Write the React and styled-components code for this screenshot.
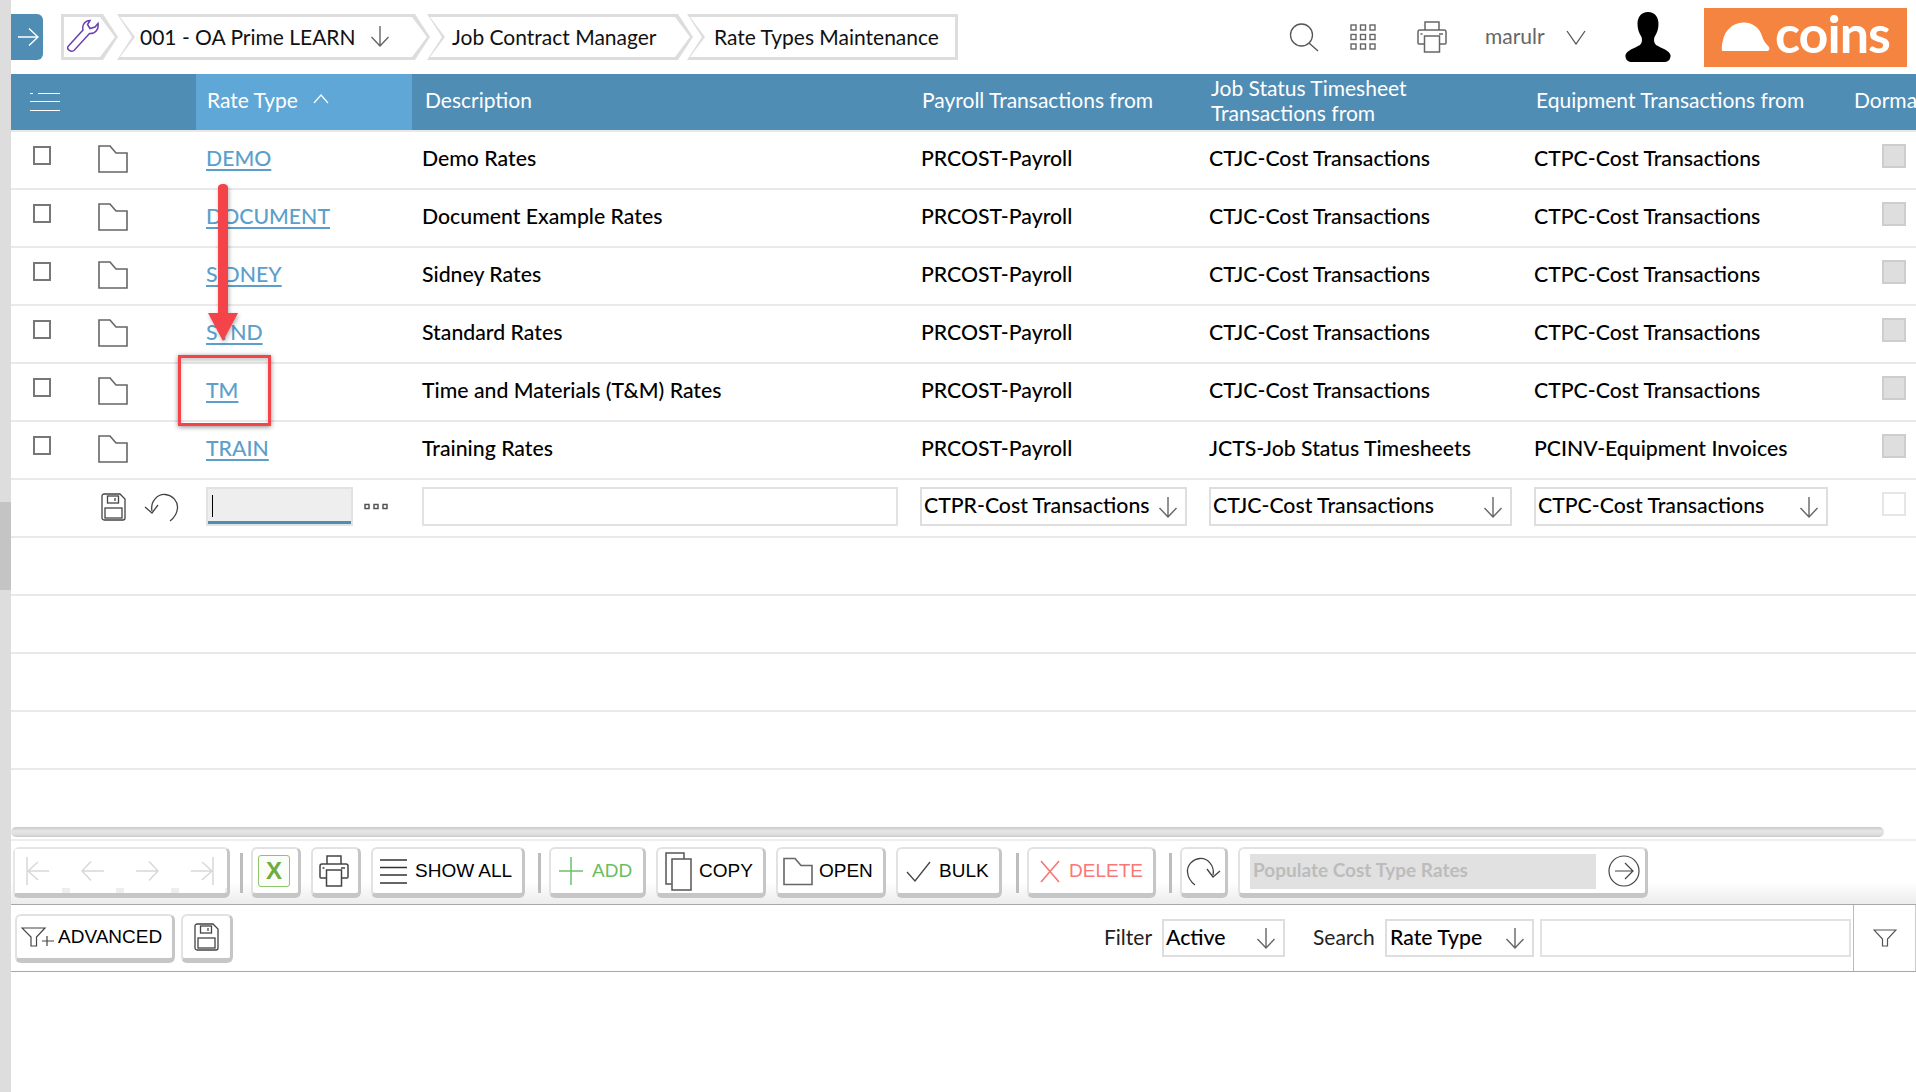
import React from 'react';
import styled, { createGlobalStyle } from 'styled-components';

const Global = createGlobalStyle`
  html, body { margin: 0; padding: 0; background: #fff; }
  body { font-family: Lato, "Liberation Sans", sans-serif; color: #000; }
  * { box-sizing: border-box; }
`;

const Page = styled.div`
  position: relative; display: flex; width: 1916px; height: 1092px; overflow: hidden; background: #fff;
`;
const Strip = styled.div`
  flex: 0 0 11px; background: #ddd; padding-top: 502px;
`;
const StripThumb = styled.div`
  height: 88px; background: #c4c4c4;
`;
const Main = styled.div`
  flex: 1; min-width: 0; display: flex; flex-direction: column;
`;

/* top bar */
const TopBar = styled.div`
  flex: 0 0 74px; display: flex; align-items: center;
`;
const Toggle = styled.div`
  width: 32px; height: 46px; background: #4f8db5; border-radius: 0 6px 6px 0;
  display: flex; align-items: center; justify-content: center; padding-left: 2px;
`;
const Crumbs = styled.div`
  display: flex; margin-left: 18px;
`;
const shape = (first, last) => {
  const r = last ? '100% 0, 100% 100%' : 'calc(100% - 15px) 0, 100% 50%, calc(100% - 15px) 100%';
  return first
    ? `polygon(0 0, ${r}, 0 100%)`
    : `polygon(0 0, ${r}, 0 100%, 15px 50%)`;
};
const Crumb = styled.div`
  position: relative; height: 46px; width: ${p => p.$w}px; margin-left: ${p => p.$ml || 0}px;
  background: #ddd; clip-path: ${p => shape(p.$first, p.$last)};
  display: flex; align-items: center; padding: 0 0 2px ${p => p.$pl}px;
  font-size: 21px; color: #111;
  &::before {
    content: ''; position: absolute; inset: 3px; background: #fff;
    clip-path: ${p => shape(p.$first, p.$last)};
  }
  & > * { position: relative; }
`;
const CrumbLabel = styled.span`
  white-space: nowrap;
`;
const CrumbArrow = styled.span`
  display: flex; margin-left: 14px;
`;
const TopItem = styled.div`
  display: flex; align-items: center; margin-left: ${p => p.$ml}px;
`;
const TopRight = styled.div`
  margin-left: auto; display: flex; align-items: center; padding-right: 9px;
`;
const UserName = styled.span`
  font-size: 21px; color: #666; width: 60px; white-space: nowrap; padding-bottom: 4px;
`;
const Logo = styled.div`
  width: 203px; height: 59px; background: #f58441; display: flex; align-items: center;
  padding-left: 17px; margin-left: 33px;
`;
const LogoText = styled.span`
  font-family: Lato, "Open Sans", sans-serif; font-weight: 700; font-size: 52px; line-height: 59px;
  color: #fff; margin-left: 5px; letter-spacing: -1px; position: relative; top: -4px;
`;

/* table */
const cols = '80px 105px 216px 499px 288px 325px 320px 72px';
const HeaderRow = styled.div`
  display: grid; grid-template-columns: ${cols}; height: 58px; border-bottom: 2px solid #e9e9e9; color: #fff;
  font-size: 21px; line-height: 25px;
`;
const HeadCell = styled.div`
  display: flex; align-items: center; padding: 0 0 5px ${p => p.$pl ?? 11}px; white-space: nowrap; overflow: hidden;
  background: ${p => (p.$active ? '#5fa7d6' : '#4f8db5')};
`;
const TwoLine = styled.div`
  line-height: 25px;
`;
const SortIcon = styled.span`
  display: flex; margin-left: 15px; margin-top: -2px;
`;
const MenuCell = styled.div`
  display: flex; align-items: center; padding-left: 18px; background: #4f8db5;
`;
const HeadBlank = styled.div`
  background: #4f8db5;
`;
const Row = styled.div`
  display: grid; grid-template-columns: ${cols}; height: 58px; border-bottom: 2px solid #e9e9e9; padding-bottom: ${p => (p.$edit ? 3 : 2)}px;
  font-size: 21.25px; font-weight: 500; align-items: center; color: #000;
`;
const Cell = styled.div`
  padding-left: ${p => p.$pl ?? 10}px; padding-bottom: ${p => (p.$text ? 2 : 0)}px; white-space: nowrap; display: flex; align-items: center;
`;
const Check = styled.span`
  display: block; width: 18px; height: 19px; border: 2px solid #777; margin-left: 22px; margin-top: -7px; background: #fff;
`;
const Dormant = styled.span`
  display: block; width: 24px; height: 24px; margin-left: 28px; margin-top: -6px;
  background: ${p => (p.$empty ? '#fff' : '#dedede')};
  border: 2px solid ${p => (p.$empty ? '#e6e6e6' : '#cdcdcd')};
`;
const RateLink = styled.a`
  color: #5b9fca; text-decoration: underline; text-decoration-thickness: 2px; text-underline-offset: 3px; font-weight: 500;
`;
const Input = styled.div`
  position: relative; height: ${p => p.$h || 39}px; width: ${p => p.$w}px; margin-left: ${p => p.$ml || 0}px; border: 2px solid #e2e2e2; background: #fff;
`;
const ActiveInput = styled(Input)`
  background: #eee; border-color: #e2e2e2;
  &::after { content: ''; position: absolute; left: 0; right: 0; bottom: 0; height: 3px; background: #4f8db5; }
`;
const Caret = styled.span`
  display: block; width: 1px; height: 22px; background: #000; margin: 6px 0 0 4px;
`;
const EditIcons = styled.div`
  display: flex; align-items: center; gap: 18px; padding: 1px 0 0 10px;
`;
const Dots = styled.span`
  display: flex; margin-left: 11px;
`;
const Select = styled.div`
  display: flex; align-items: center; justify-content: space-between; height: ${p => p.$h || 39}px; width: ${p => p.$w}px;
  border: 2px solid #dedede; padding: 0 ${p => p.$pr ?? 7}px 0 ${p => p.$pl ?? 2}px; font-size: 21.25px; font-weight: 500; color: #000; background: #fff;
  white-space: nowrap;
`;
const SelectText = styled.span`
  padding-bottom: 3px;
`;
const ScrollTrack = styled.div`
  width: 1873px; height: 10px; margin-top: 57px; border-radius: 5px;
  background: linear-gradient(#c9c9c9, #e6e6e6 40%, #dcdcdc 80%, #c9c9c9);
`;

/* toolbar */
const Toolbar = styled.div`
  margin-top: 2px; height: 66px; border-top: 2px solid #eee; border-bottom: 1px solid #a8a8a8;
  background: linear-gradient(#fff 0%, #fff 65%, #ececec 100%);
  display: flex; align-items: flex-start; gap: 10px; padding: 6px 0 0 2px;
  font-family: "Liberation Sans", Arial, sans-serif;
`;
const Btn = styled.div`
  display: flex; align-items: center; width: ${p => p.$w}px; height: ${p => p.$h || 51}px;
  background: #fff; border: 2px solid #e2e2e2; border-right: 3px solid #c6c6c6; border-bottom: 5px solid #c6c6c6; border-radius: 6px;
  padding: 0 0 0 ${p => p.$pl ?? 6}px; gap: ${p => p.$gap ?? 7}px; justify-content: ${p => (p.$center ? 'center' : 'flex-start')};
  font-size: 19px; color: ${p => p.$color || '#000'}; white-space: nowrap;
`;
const NavGroup = styled(Btn)`
  background: linear-gradient(#fff 88%, #eee 88%); gap: 8px; padding: 0 2px 0 0; border-color: #e6e6e6; border-right-color: #c6c6c6; border-bottom-color: #c6c6c6;
`;
const NavCell = styled.div`
  flex: 1; height: 100%; background: #fff; display: flex; align-items: center; justify-content: center;
`;
const Sep = styled.div`
  width: 3px; height: 40px; margin: 6px -2px 0 ${p => p.$ml ?? 3}px; background: #bdbdbd;
`;
const ExcelBox = styled.div`
  width: 32px; height: 32px; border: 1px solid #8cc56c; border-radius: 3px; background: #fafdf8;
  display: flex; align-items: center; justify-content: center;
  font-weight: 700; font-size: 24px; color: #6fab40;
`;
const PopulateBtn = styled(Btn)`
  padding-left: 10px; gap: 12px;
`;
const PopulateField = styled.div`
  width: 346px; height: 35px; background: #e1e1e1; color: #bcbcbc; display: flex; align-items: center;
  font-family: Lato, sans-serif; font-size: 19px; font-weight: 700; padding: 0 0 3px 3px;
`;

/* filter bar */
const FilterBar = styled.div`
  height: 67px; border-bottom: 1px solid #a8a8a8; display: flex; align-items: flex-start;
`;
const FilterLeft = styled.div`
  display: flex; gap: 6px; padding: 9px 0 0 4px; font-family: "Liberation Sans", Arial, sans-serif;
`;
const FilterRight = styled.div`
  margin-left: auto; height: 100%; display: flex; align-items: center;
`;
const FieldLabel = styled.span`
  font-size: 21px; color: #222; width: ${p => p.$w}px; padding: 0 0 4px ${p => p.$pl || 0}px; white-space: nowrap;
`;
const FunnelCell = styled.div`
  width: 63px; height: 100%; margin-left: 2px; border-left: 1px solid #bbb; border-right: 1px solid #ccc;
  display: flex; align-items: center; justify-content: center; padding-left: 1px;
`;

/* overlay annotations */
const RedBox = styled.div`
  position: absolute; left: 178px; top: 355px; width: 93px; height: 71px; border: 3px solid #f4444a;
  box-shadow: 0 1px 5px rgba(0,0,0,.45), inset 0 3px 4px rgba(0,0,0,.2);
`;
const RedArrow = styled.svg`
  position: absolute; left: 207px; top: 183px; filter: drop-shadow(1px 2px 2px rgba(0,0,0,.3));
`;

/* icons */
const Arrow = ({ dir = 'down', w = 20, h = 22, c = '#666', sw = 1.4 }) => {
  const m = {
    down: `M${w / 2} 1V${h - 1}M1.5 ${h - 10}L${w / 2} ${h - 1}L${w - 1.5} ${h - 10}`,
    right: `M1 ${h / 2}H${w - 1}M${w - 10} 1.5L${w - 1} ${h / 2}L${w - 10} ${h - 1.5}`,
    left: `M${w - 1} ${h / 2}H1M10 1.5L1 ${h / 2}L10 ${h - 1.5}`,
  };
  return <svg width={w} height={h} viewBox={`0 0 ${w} ${h}`} fill="none" stroke={c} strokeWidth={sw}><path d={m[dir]} /></svg>;
};
const Wrench = () => (
  <svg width="34" height="34" viewBox="0 0 34 34" fill="none" stroke="#6a3fb0" strokeWidth="1.5">
    <path d="M2 27.5 L17 11 C15.8 6.5 18.5 1.8 24 1.5 L21.5 5.5 L24 9.5 L29 8 L32 4.5 C33 10 29.5 15 23.5 14.5 L8 31.5 C5 33.5 0.5 30.5 2 27.5Z" />
  </svg>
);
const Folder = ({ w = 30, h = 28 }) => (
  <svg width={w} height={h} viewBox="0 0 30 28" fill="none" stroke="#666" strokeWidth="1.6"><path d="M1 1H12L18 8H29V27H1Z" /></svg>
);
const Menu = () => (
  <svg width="31" height="20" viewBox="0 0 31 20" stroke="#fff" strokeWidth="1" fill="none">
    <path d="M1 1.5H4M9 1.5H31M1 9.5H31M1 18.5H31" />
  </svg>
);
const Search = () => (
  <svg width="30" height="29" viewBox="0 0 30 29" fill="none" stroke="#555" strokeWidth="1.3"><circle cx="12.5" cy="12" r="11" /><path d="M20 20L29 28" /></svg>
);
const GridIcon = () => (
  <svg width="26" height="26" viewBox="0 0 26 26" fill="none" stroke="#666" strokeWidth="1.4">
    {[0, 9.5, 19].map(y => [0, 9.5, 19].map(x => <rect key={`${x}-${y}`} x={x + 1} y={y + 1} width="5" height="5" />))}
  </svg>
);
const Printer = ({ c = '#666' }) => (
  <svg width="30" height="32" viewBox="0 0 30 32" fill="none" stroke={c} strokeWidth="1.5">
    <path d="M8 9V1H22V9" /><path d="M7 23H2C1.5 23 1 22.5 1 22V11C1 9.800 2 9 3 9H27C28 9 29 9.800 29 11V22C29 22.500 28.500 23 28 23H23" />
    <rect x="7.500" y="15" width="15" height="16" /><path d="M3.500 13H5.500M22 13H26" />
  </svg>
);
const Person = () => (
  <svg width="46" height="50" viewBox="0 0 46 50" fill="#000">
    <path d="M23 0C16 0 12.500 5 12.500 12C12.500 17 14 21 16.500 25C17.500 28 17 31 15 33C10 36 2 38 0.500 43C0 46 2 50 6 50H40C44 50 46 46 45.500 43C44 38 36 36 31 33C29 31 28.500 28 29.500 25C32 21 33.500 17 33.500 12C33.500 5 30 0 23 0Z" />
  </svg>
);
const Hat = () => (
  <svg width="49" height="30" viewBox="0 0 49 30" fill="#fff">
    <path d="M1 29C0.500 25 1 22 2 18C4 8 12 1 22 0.500C31 0 39 6 41 14C42 18 45 22 48 25C49 27 48 29 46 29Z" />
  </svg>
);
const Save = () => (
  <svg width="25" height="28" viewBox="0 0 25 28" fill="none" stroke="#444" strokeWidth="1.3">
    <path d="M3 1H19L24 6V25C24 26 23 27 22 27H3C2 27 1 26 1 25V3C1 2 2 1 3 1Z" />
    <rect x="6.500" y="3" width="11" height="7" /><rect x="4" y="15" width="17" height="10" /><path d="M14 5V8" />
  </svg>
);
const Undo = () => (
  <svg width="35" height="29" viewBox="0 0 35 29" fill="none" stroke="#444" strokeWidth="1.300">
    <path d="M8 18C6 8 14 1 21 1.500C29 2 34 9 33.500 15C33 21 30 25 26 28" /><path d="M1 14L8 20L14 12" />
  </svg>
);
const DotsIcon = () => (
  <svg width="24" height="8" viewBox="0 0 24 8" fill="none" stroke="#555" strokeWidth="1.500">
    <rect x="1" y="1.500" width="4" height="4" /><rect x="10" y="1.500" width="4" height="4" /><rect x="19" y="1.500" width="4" height="4" />
  </svg>
);
const Lines = () => (
  <svg width="27" height="25" viewBox="0 0 27 25" stroke="#333" strokeWidth="1.300"><path d="M0 1H27M0 8.500H27M0 16H27M0 24H27" /></svg>
);
const Plus = () => (
  <svg width="24" height="28" viewBox="0 0 24 28" stroke="#6dc06d" strokeWidth="1.500"><path d="M12 0V28M0 14H24" /></svg>
);
const Copy = () => (
  <svg width="27" height="39" viewBox="0 0 27 39" fill="none" stroke="#555" strokeWidth="1.500">
    <path d="M6.500 32H1V1H19V7" /><rect x="7" y="7" width="19" height="31" />
  </svg>
);
const Check2 = () => (
  <svg width="25" height="21" viewBox="0 0 25 21" fill="none" stroke="#444" strokeWidth="1.300"><path d="M1 11L9 20L24 1" /></svg>
);
const Cross = () => (
  <svg width="20" height="23" viewBox="0 0 20 23" fill="none" stroke="#f87676" strokeWidth="1.600"><path d="M1 1L19 22M19 1L1 22" /></svg>
);
const Redo = () => (
  <svg width="35" height="29" viewBox="0 0 35 29" fill="none" stroke="#444" strokeWidth="1.300">
    <path d="M27 18C29 8 21 1 14 1.500C6 2 1 9 1.500 15C2 21 5 25 9 28" /><path d="M34 14L27 20L21 12" />
  </svg>
);
const CircleArrow = () => (
  <svg width="32" height="32" viewBox="0 0 32 32" fill="none" stroke="#444" strokeWidth="1.200">
    <circle cx="16" cy="16" r="15" /><path d="M7 16H25M17 8L25 16L17 24" />
  </svg>
);
const Funnel = () => (
  <svg width="24" height="18" viewBox="0 0 24 18" fill="none" stroke="#555" strokeWidth="1.200"><path d="M1 1H23L14.500 10V17H9.500V10Z" /></svg>
);
const FunnelPlus = () => (
  <svg width="34" height="20" viewBox="0 0 34 20" fill="none" stroke="#444" strokeWidth="1.200">
    <path d="M1 1H24L15.500 10V19H10V10Z" /><path d="M26 9V19M21 14H33" />
  </svg>
);

const rows = [
  ['DEMO', 'Demo Rates', 'PRCOST-Payroll', 'CTJC-Cost Transactions', 'CTPC-Cost Transactions'],
  ['DOCUMENT', 'Document Example Rates', 'PRCOST-Payroll', 'CTJC-Cost Transactions', 'CTPC-Cost Transactions'],
  ['SIDNEY', 'Sidney Rates', 'PRCOST-Payroll', 'CTJC-Cost Transactions', 'CTPC-Cost Transactions'],
  ['STND', 'Standard Rates', 'PRCOST-Payroll', 'CTJC-Cost Transactions', 'CTPC-Cost Transactions'],
  ['TM', 'Time and Materials (T&M) Rates', 'PRCOST-Payroll', 'CTJC-Cost Transactions', 'CTPC-Cost Transactions'],
  ['TRAIN', 'Training Rates', 'PRCOST-Payroll', 'JCTS-Job Status Timesheets', 'PCINV-Equipment Invoices'],
];

export default function App() {
  return (
    <Page>
      <Global />
      <Strip><StripThumb /></Strip>
      <Main>
        <TopBar>
          <Toggle><Arrow dir="right" w={22} h={20} c="#fff" /></Toggle>
          <Crumbs>
            <Crumb $first $w={57} $pl={5}><Wrench /></Crumb>
            <Crumb $w={313} $ml={-1} $pl={23}>
              <CrumbLabel>001 - OA Prime LEARN</CrumbLabel>
              <CrumbArrow><Arrow /></CrumbArrow>
            </Crumb>
            <Crumb $w={266} $ml={-3} $pl={25}><CrumbLabel>Job Contract Manager</CrumbLabel></Crumb>
            <Crumb $last $w={271} $ml={-6} $pl={27}><CrumbLabel>Rate Types Maintenance</CrumbLabel></Crumb>
          </Crumbs>
          <TopRight>
            <Search />
            <TopItem $ml={31}><GridIcon /></TopItem>
            <TopItem $ml={41}><Printer /></TopItem>
            <TopItem $ml={38}><UserName>marulr</UserName></TopItem>
            <TopItem $ml={21}>
              <svg width="20" height="15" viewBox="0 0 20 15" fill="none" stroke="#555" strokeWidth="1.300"><path d="M1 1L10 14L19 1" /></svg>
            </TopItem>
            <TopItem $ml={39}><Person /></TopItem>
            <Logo><Hat /><LogoText>coins</LogoText></Logo>
          </TopRight>
        </TopBar>

        <HeaderRow>
          <MenuCell><Menu /></MenuCell>
          <HeadBlank />
          <HeadCell $active $pl={11}>
            Rate Type
            <SortIcon>
              <svg width="16" height="10" viewBox="0 0 16 10" fill="none" stroke="#fff" strokeWidth="1.200"><path d="M1 9L8 1L15 9" /></svg>
            </SortIcon>
          </HeadCell>
          <HeadCell $pl={13}>Description</HeadCell>
          <HeadCell>Payroll Transactions from</HeadCell>
          <HeadCell $pl={12}><TwoLine>Job Status Timesheet<br />Transactions from</TwoLine></HeadCell>
          <HeadCell $pl={12}>Equipment Transactions from</HeadCell>
          <HeadCell $pl={10}>Dormant</HeadCell>
        </HeaderRow>

        {rows.map(r => (
          <Row key={r[0]}>
            <Cell $pl={0}><Check /></Cell>
            <Cell $pl={7}><Folder /></Cell>
            <Cell $text><RateLink>{r[0]}</RateLink></Cell>
            <Cell $text>{r[1]}</Cell>
            <Cell $text>{r[2]}</Cell>
            <Cell $text>{r[3]}</Cell>
            <Cell $text>{r[4]}</Cell>
            <Cell $pl={10}><Dormant /></Cell>
          </Row>
        ))}
        <Row $edit>
          <div />
          <EditIcons><Save /><Undo /></EditIcons>
          <Cell><ActiveInput $w={147}><Caret /></ActiveInput><Dots><DotsIcon /></Dots></Cell>
          <Cell><Input $w={476} /></Cell>
          <Cell $pl={9}><Select $w={267}><SelectText>CTPR-Cost Transactions</SelectText><Arrow /></Select></Cell>
          <Cell><Select $w={303}><SelectText>CTJC-Cost Transactions</SelectText><Arrow /></Select></Cell>
          <Cell><Select $w={294}><SelectText>CTPC-Cost Transactions</SelectText><Arrow /></Select></Cell>
          <Cell $pl={10}><Dormant $empty /></Cell>
        </Row>
        <Row /><Row /><Row /><Row />

        <ScrollTrack />

        <Toolbar>
          <NavGroup $w={217}>
            <NavCell>
              <svg width="24" height="28" viewBox="0 0 24 28" fill="none" stroke="#d8d8d8" strokeWidth="1.500"><path d="M1 0V28M23 14H2M12 5L2 14L12 23" /></svg>
            </NavCell>
            <NavCell><Arrow dir="left" w={24} h={22} c="#d8d8d8" sw={1.5} /></NavCell>
            <NavCell><Arrow dir="right" w={24} h={22} c="#d8d8d8" sw={1.5} /></NavCell>
            <NavCell>
              <svg width="24" height="28" viewBox="0 0 24 28" fill="none" stroke="#d8d8d8" strokeWidth="1.500"><path d="M23 0V28M1 14H22M12 5L22 14L12 23" /></svg>
            </NavCell>
          </NavGroup>
          <Sep $ml={0} />
          <Btn $w={50} $pl={5}><ExcelBox>X</ExcelBox></Btn>
          <Btn $w={50} $pl={6}><Printer c="#444" /></Btn>
          <Btn $w={154} $pl={7} $gap={8}><Lines />SHOW ALL</Btn>
          <Sep />
          <Btn $w={97} $color="#6bbd5e" $pl={8} $gap={9}><Plus />ADD</Btn>
          <Btn $w={110} $pl={7} $gap={7}><Copy />COPY</Btn>
          <Btn $w={110} $pl={5} $gap={6}><Folder w={30} h={33} />OPEN</Btn>
          <Btn $w={106} $pl={8} $gap={8}><Check2 />BULK</Btn>
          <Sep $ml={4} />
          <Btn $w={129} $color="#f87878" $pl={11} $gap={9}><Cross />DELETE</Btn>
          <Sep />
          <Btn $w={48} $center $pl={0}><Redo /></Btn>
          <PopulateBtn $w={410}>
            <PopulateField>Populate Cost Type Rates</PopulateField>
            <CircleArrow />
          </PopulateBtn>
        </Toolbar>

        <FilterBar>
          <FilterLeft>
            <Btn $w={160} $h={49} $pl={4} $gap={3}><FunnelPlus />ADVANCED</Btn>
            <Btn $w={52} $h={49} $center $pl={0}><Save /></Btn>
          </FilterLeft>
          <FilterRight>
            <FieldLabel $w={58}>Filter</FieldLabel>
            <Select $w={123} $h={38} $pl={2} $pr={7}><SelectText>Active</SelectText><Arrow /></Select>
            <FieldLabel $w={100} $pl={28}>Search</FieldLabel>
            <Select $w={149} $h={38} $pl={3} $pr={7}><SelectText>Rate Type</SelectText><Arrow /></Select>
            <Input $w={311} $h={38} $ml={6} />
            <FunnelCell><Funnel /></FunnelCell>
          </FilterRight>
        </FilterBar>
      </Main>

      <RedBox />
      <RedArrow width="32" height="160" viewBox="0 0 32 160">
        <path d="M11 5C11 2 13 1 16 1C19 1 21 2 21 5V130H31L16 158L1 130H11Z" fill="#f4444a" />
      </RedArrow>
    </Page>
  );
}
